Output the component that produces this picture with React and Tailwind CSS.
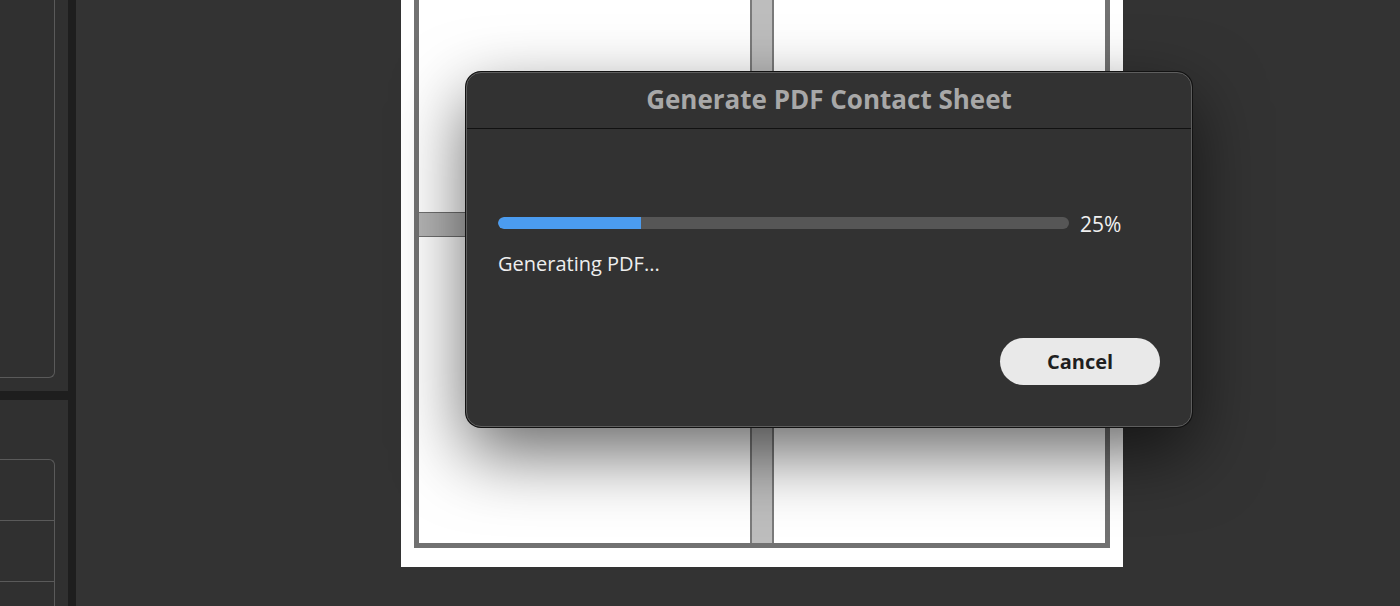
import React from "react"

const font = { fontFamily: '"Open Sans", "Noto Sans", Arial, sans-serif' }

function LeftPanel() {
    return <div className="w-[68px] h-full bg-[#303030] flex flex-col shrink-0">
        <div className="h-[391px] pb-[13px]">
            <div className="w-[55px] h-full border-r border-b border-[#5a5a5a] rounded-br-[6px]" />
        </div>
        <div className="h-[9px] bg-[#1e1e1e]" />
        <div className="flex-1 pt-[59px] overflow-hidden">
            <div className="w-[55px] border-t border-r border-[#5a5a5a] rounded-tr-[6px]">
                <div className="h-[61px] border-b border-[#5a5a5a]" />
                <div className="h-[61px] border-b border-[#5a5a5a]" />
                <div className="h-[61px]" />
            </div>
        </div>
    </div>
}

function Cell() {
    return <div className="flex-1 bg-white" />
}

function VGutter() {
    return <div className="w-[24px] bg-[#bdbdbd] border-x-2 border-[#7a7a7a]" />
}

function Page() {
    return <div className="w-[722px] h-[567px] bg-white px-[13px] pb-[19px]">
        <div className="h-full flex flex-col border-x-[5px] border-b-[5px] border-[#717171]">
            <div className="h-[212px] flex">
                <Cell />
                <VGutter />
                <Cell />
            </div>
            <div className="h-[25px] bg-[#b5b5b5] border-y border-[#6f6f6f]" />
            <div className="flex-1 flex">
                <Cell />
                <VGutter />
                <Cell />
            </div>
        </div>
    </div>
}

function Dialog() {
    return <div
        className="absolute left-[390px] top-[72px] w-[726px] h-[355px] flex flex-col bg-[#323232] rounded-[15px] border border-[#5e5e5e] shadow-[0_0_0_1px_#121212,0_26px_70px_rgba(0,0,0,0.6)] overflow-hidden"
        style={font}
    >
        <div className="h-[56px] pb-[4px] flex items-center justify-center border-b border-[#111111] shrink-0">
            <span className="text-[26px] font-bold text-[#a8a8a8] leading-none">Generate PDF Contact Sheet</span>
        </div>
        <div className="flex-1 flex flex-col px-[31px] pt-[88px]">
            <div className="h-[12px] flex items-center">
                <div className="w-[571px] h-[12px] rounded-full bg-[#565656] overflow-hidden">
                    <div className="w-1/4 h-full bg-[#4b9cf0] rounded-l-full" />
                </div>
                <span className="ml-[11px] mt-[3px] text-[21px] font-medium text-[#f0f0f0] leading-none">25%</span>
            </div>
            <div className="mt-[21px] text-[20px] text-[#eeeeee] leading-[28px]">Generating PDF...</div>
            <div className="mt-[60px] flex justify-end">
                <button className="w-[160px] h-[47px] rounded-full bg-[#e9e9e9] text-[20px] font-bold text-[#1f1f1f]">Cancel</button>
            </div>
        </div>
    </div>
}

export default function App() {
    return <div className="w-[1400px] h-[606px] flex bg-[#333333] overflow-hidden">
        <LeftPanel />
        <div className="w-[8px] h-full bg-[#1e1e1e] shrink-0" />
        <div className="flex-1 relative pl-[325px]">
            <Page />
            <Dialog />
        </div>
    </div>
}
